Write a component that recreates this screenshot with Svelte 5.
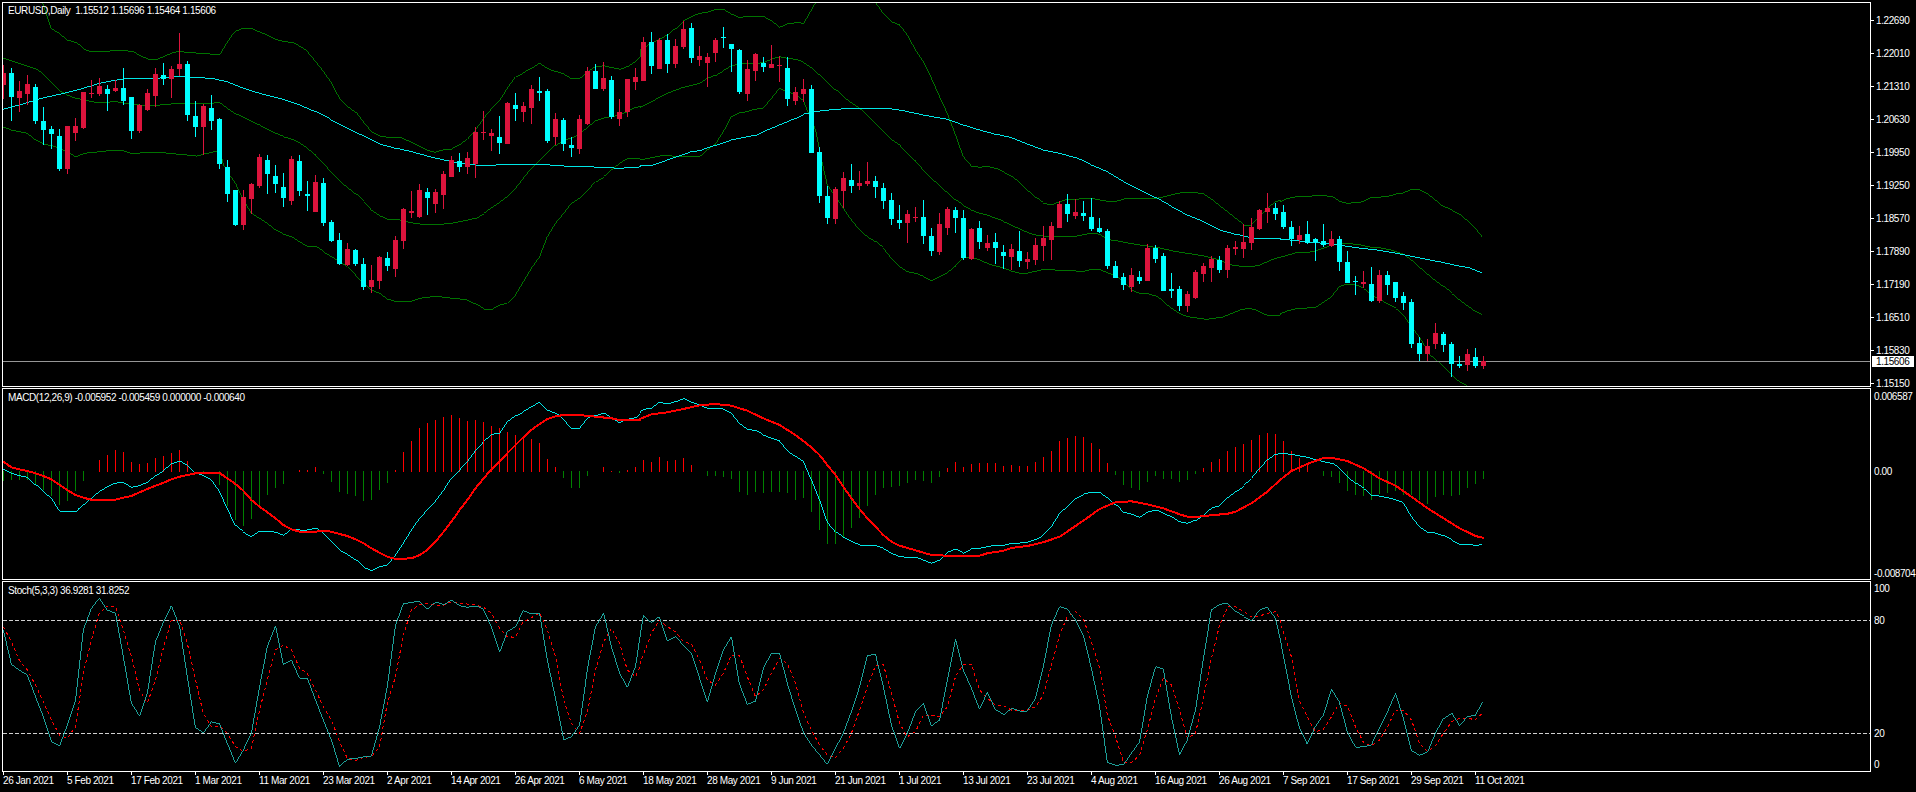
<script>
  // crops the curves were read from: [left edge, horizontal scale]
  const crops = [[0, 2.45], [640, 2.45], [1280, 2.465]];

  function points(chunks, yBase) {
    const out = [];
    chunks.forEach((flat, i) => {
      for (let k = 0; k < flat.length; k += 2) {
        const x = crops[i][0] + flat[k] / crops[i][1];
        out.push(`${x.toFixed(1)},${(yBase + flat[k + 1] / 3).toFixed(1)}`);
      }
    });
    return out.join(' ');
  }

  const barX = (n) => 3 + 8 * n;

  // [bull, high, bodyTop, bodyBottom, low] in third-pixels
  const candles = [
    [1,195,219,255,297],[0,205,219,291,365],[1,243,273,294,335],[1,225,252,282,315],[0,252,261,363,372],
    [0,321,363,390,435],[0,378,387,402,447],[0,388,408,507,513],[1,378,378,507,522],[1,354,378,399,423],
    [1,276,276,384,387],[1,240,279,282,294],[1,234,258,282,288],[0,255,267,282,333],[1,240,264,273,276],
    [0,204,264,303,315],[0,291,291,393,417],[1,312,315,393,399],[1,267,279,330,333],[1,204,222,288,321],
    [0,190,225,237,255],[1,198,207,237,294],[1,99,192,207,228],[0,183,192,345,363],[0,303,348,381,411],
    [1,312,318,381,465],[0,285,324,363,390],[0,354,357,492,507],[0,480,501,582,606],[0,570,570,675,678],
    [1,570,591,675,690],[1,549,552,597,642],[1,462,471,558,564],[0,465,480,522,582],[0,495,528,552,579],
    [0,519,561,594,621],[1,468,477,603,615],[0,465,483,573,588],[0,543,582,588,633],[1,525,546,636,636],
    [0,534,549,669,678],[0,660,666,723,726],[0,699,720,792,795],[1,729,747,795,798],[0,747,750,792,798],
    [0,774,792,861,870],[1,795,840,861,879],[1,768,771,843,867],[0,756,774,798,813],[1,708,720,807,831],
    [1,624,627,723,747],[1,573,633,639,654],[1,552,570,651,654],[0,564,576,594,645],[1,567,576,612,639],
    [1,513,522,585,627],[1,468,480,531,531],[0,459,483,501,516],[1,456,474,501,522],[1,381,396,492,534],
    [1,333,396,399,420],[1,387,399,408,453],[0,348,411,429,462],[1,306,309,432,432],[0,279,315,327,363],
    [1,306,318,336,366],[1,255,267,324,372],[0,231,273,279,303],[0,267,273,423,429],[1,339,357,411,435],
    [0,354,360,432,453],[0,411,435,444,471],[1,345,357,447,462],[1,201,213,372,375],[0,192,213,267,267],
    [1,186,234,267,273],[0,228,240,351,357],[1,297,336,357,378],[1,237,237,336,351],[1,204,231,246,270],
    [1,111,126,243,243],[0,96,126,198,222],[1,114,120,207,207],[0,102,120,192,219],[1,117,138,192,204],
    [1,63,87,141,147],[0,69,84,174,189],[1,138,168,180,198],[1,159,171,189,261],[1,114,120,159,186],
    [0,81,111,114,144],[0,132,132,147,216],[0,147,150,276,282],[1,180,207,282,303],[1,159,162,213,243],
    [0,171,189,201,216],[1,135,192,204,204],[1,168,195,198,246],[0,171,204,297,318],[1,261,276,303,315],
    [1,237,267,282,306],[0,255,267,459,459],[0,441,456,588,609],[0,558,588,654,672],[1,561,567,657,672],
    [1,516,534,573,624],[0,492,540,558,579],[1,513,549,558,570],[1,486,543,552,558],[0,528,543,561,594],
    [0,549,564,603,627],[0,579,600,657,675],[0,615,660,669,687],[1,630,642,669,729],[1,621,651,654,666],
    [0,600,651,708,732],[0,684,708,753,768],[1,639,672,756,765],[1,621,627,684,705],[0,621,630,654,699],
    [0,630,654,774,780],[1,684,687,777,780],[0,663,684,726,747],[1,705,729,744,753],[0,699,726,744,792],
    [0,735,756,768,807],[1,732,747,771,810],[0,693,753,783,801],[1,756,777,786,807],[1,714,735,780,795],
    [1,678,714,738,783],[1,666,678,720,780],[1,603,612,684,684],[0,582,612,642,666],[1,597,636,648,657],
    [0,603,639,648,663],[0,594,651,687,693],[0,654,684,696,699],[0,687,693,798,807],[0,783,798,834,834],
    [0,819,831,855,870],[1,804,825,861,876],[0,813,831,843,852],[1,732,744,843,843],[0,735,744,777,789],
    [0,759,768,873,873],[0,819,867,873,894],[0,858,867,918,933],[1,873,882,918,936],[1,810,816,894,897],
    [1,789,798,822,846],[1,768,777,804,846],[0,768,780,810,819],[1,735,744,810,834],[1,723,741,747,765],
    [1,672,726,747,774],[1,654,681,729,750],[1,627,630,687,690],[1,579,624,636,669],[0,609,624,642,660],
    [0,615,636,681,687],[0,663,681,717,738],[1,678,705,720,732],[0,663,702,729,732],[0,714,717,726,783],
    [0,672,723,735,741],[1,693,717,738,741],[0,708,717,786,813],[0,753,786,849,849],[0,828,843,846,885],
    [1,813,846,852,864],[0,801,852,903,906],[1,810,825,903,909],[0,813,825,855,885],[0,846,846,894,906],
    [0,876,888,909,930],[0,897,906,1032,1044],[0,1011,1029,1062,1083],[1,1017,1038,1062,1083],[1,969,999,1032,1047],
    [0,996,1002,1035,1056],[0,1026,1032,1092,1131],[0,1068,1092,1098,1104],[1,1047,1062,1095,1113],[0,1044,1071,1098,1104],
    [1,1068,1083,1098,1107]
  ];

  const upperBand = points([
    [105,10,125,85,145,100,165,120,185,127,205,148,225,155,250,155,280,152,300,152,325,154,345,168,365,178,385,178,420,160,440,153,460,158,500,160,538,165,555,130,575,95,595,85,615,85,650,103,680,120,700,125,720,128,750,150,770,180,790,210,810,245,832,295,850,318,875,340,890,365,910,395,930,408,950,412,985,414,1005,425,1030,440,1050,452,1065,457,1085,450,1105,448,1125,435,1145,418,1165,390,1185,355,1205,325,1225,300,1243,265,1263,230,1282,218,1302,205,1322,190,1341,205,1361,215,1381,222,1400,236,1420,236,1440,215,1459,200,1480,197,1500,203,1520,208,1540,198,1557,185,1568,170],
    [0,150,20,135,47,118,67,105,87,85,106,62,126,50,146,40,165,37,185,28,204,28,224,42,243,52,263,50,302,49,322,62,342,82,361,72,381,68,401,70,420,30,430,8,470,-60,540,-60,577,8,596,40,616,65,636,75,655,105,675,150,694,185,714,235,734,290,753,340,773,405,792,470,812,498,832,502,851,499,871,505,891,517,910,528,930,547,949,570,969,592,988,610,1008,615,1028,605,1047,598,1067,598,1087,595,1106,595,1126,600,1145,604,1165,604,1185,596,1204,597,1224,596,1243,595,1263,595,1282,590,1302,585,1322,579,1341,577,1361,578,1381,582,1400,597,1420,617,1440,635,1459,655,1479,677,1498,675,1518,650,1537,625,1557,605,1568,600],
    [0,605,20,595,40,590,70,590,87,586,107,586,127,590,146,604,166,610,186,608,206,604,225,592,245,592,265,588,285,582,304,579,324,568,344,570,364,582,383,600,403,620,423,630,443,643,462,662,482,685,499,712]
  ], 0);

  const midBand = points([
    [8,175,47,190,87,207,107,225,127,250,146,272,165,285,185,295,224,305,243,308,283,305,302,310,342,315,381,316,420,312,459,310,498,312,518,310,538,307,557,325,577,342,596,352,636,375,655,388,675,400,694,410,714,417,734,428,753,445,773,465,792,490,812,517,832,543,851,562,871,582,891,605,910,630,930,647,949,657,979,660,1008,668,1028,672,1047,675,1087,672,1106,670,1126,665,1165,655,1185,640,1224,607,1243,590,1263,565,1282,535,1302,505,1322,480,1341,458,1361,435,1381,420,1400,415,1420,402,1440,382,1459,362,1479,353,1498,350,1518,345,1537,335,1557,322,1568,318],
    [0,322,28,305,67,280,106,262,146,250,165,235,185,225,204,212,224,197,243,192,263,190,283,190,302,188,322,178,342,170,361,175,381,178,401,188,420,203,440,225,459,247,479,270,498,290,518,308,538,325,557,345,577,370,596,395,616,418,636,435,655,460,675,483,694,510,714,535,734,557,753,578,773,600,792,617,812,630,832,640,851,645,871,655,891,665,910,675,930,687,949,697,969,705,988,708,1008,710,1047,710,1067,708,1106,699,1126,703,1145,718,1165,722,1185,727,1224,735,1263,742,1302,752,1341,760,1381,768,1420,780,1440,792,1459,797,1479,800,1500,800,1518,795,1537,785,1557,775,1568,770],
    [0,772,20,765,40,758,70,757,87,753,107,745,127,735,146,730,166,730,186,733,206,737,225,742,245,743,265,748,285,755,304,762,324,780,344,802,364,823,383,842,403,860,423,880,443,900,462,917,482,935,499,946]
  ], 0);

  const lowerBand = points([
    [8,381,28,390,47,395,67,400,87,420,106,432,127,437,146,445,165,455,185,470,204,460,224,458,243,455,283,450,302,452,322,460,342,459,400,458,430,462,459,465,479,468,498,463,518,457,538,453,548,495,557,515,577,550,596,600,616,640,636,655,655,670,675,690,694,703,714,710,734,725,753,739,773,740,792,755,812,770,832,785,851,800,871,825,891,850,910,870,930,880,949,897,969,904,1008,904,1028,895,1067,889,1106,895,1126,897,1145,900,1165,912,1185,927,1204,929,1224,915,1243,910,1263,885,1282,845,1302,805,1322,770,1341,710,1361,670,1381,640,1400,610,1420,595,1440,570,1459,545,1479,530,1498,510,1518,490,1537,476,1557,475,1568,478],
    [0,480,20,475,60,465,87,470,146,470,165,450,185,432,204,395,224,350,243,338,263,335,283,327,302,325,322,295,342,265,361,275,381,285,401,305,430,390,445,480,459,555,479,590,498,625,518,660,538,690,557,710,577,725,596,745,616,775,636,800,655,815,675,820,694,830,714,843,734,830,753,818,773,798,792,772,812,772,832,780,851,790,871,798,891,805,910,813,930,820,949,820,969,813,988,808,1047,812,1087,814,1106,808,1126,808,1145,818,1165,828,1204,870,1224,880,1243,880,1263,888,1282,905,1302,925,1322,940,1341,950,1388,958,1430,950,1470,930,1490,925,1510,930,1535,945,1568,945],
    [0,942,20,932,45,925,87,923,107,907,127,890,146,860,166,852,186,855,206,865,225,885,245,897,265,912,285,925,304,945,324,980,344,1012,370,1065,395,1090,423,1125,445,1148,460,1158]
  ], 0);

  const movingAvg = points([
    [8,328,47,315,107,293,146,283,204,265,243,250,283,240,312,235,381,235,440,229,479,233,518,235,557,245,596,265,636,280,694,298,734,315,773,335,812,360,851,385,891,408,930,432,969,445,1008,455,1047,468,1087,480,1126,490,1165,495,1204,496,1243,493,1322,493,1381,498,1440,500,1518,505,1557,502,1568,500],
    [0,498,28,497,67,480,126,455,146,452,185,435,224,420,283,405,322,385,381,355,401,342,440,333,479,328,518,325,606,325,645,332,694,345,753,358,792,375,832,390,871,403,910,413,949,432,988,450,1028,460,1067,473,1106,495,1145,515,1185,545,1224,570,1263,593,1302,620,1341,645,1381,665,1420,690,1459,703,1498,714,1568,715],
    [0,717,40,722,80,727,120,732,160,738,200,745,240,750,280,758,320,768,360,778,400,787,440,798,470,805,499,819]
  ], 0);

  const macdZero = 484;
  const histogram = [
    515,512,510,510,525,540,560,587,573,545,513,484,450,435,420,426,456,462,459,444,438,429,420,453,484,491,484,525,590,630,
    648,627,587,555,534,522,484,480,480,471,492,516,546,552,558,573,570,540,520,480,426,393,354,339,330,321,315,324,333,330,
    336,348,354,366,375,381,387,399,447,471,504,534,534,498,484,471,483,490,480,471,450,456,441,453,450,444,465,484,498,498,
    501,507,546,555,546,549,546,546,549,570,564,606,660,702,702,684,654,624,588,555,534,531,528,519,510,513,519,501,474,456,
    471,462,459,459,459,468,465,468,468,456,441,423,393,384,378,381,399,417,459,495,525,534,540,516,498,507,507,516,510,492,
    474,456,447,423,411,402,390,375,369,372,393,423,444,459,484,498,501,519,543,555,558,570,552,549,543,555,555,570,582,561,
    555,558,555,534,522,507
  ];

  const macdLine = points([
    [8,478,28,490,47,497,67,502,87,525,106,545,126,565,146,604,185,604,204,585,224,565,243,545,263,530,283,519,302,517,322,532,342,527,361,517,381,497,401,480,420,462,440,453,459,465,479,490,498,497,518,510,538,545,557,597,577,647,596,667,616,680,636,663,655,663,675,667,694,677,714,657,734,660,753,660,773,655,792,670,812,695,832,720,851,733,871,750,891,772,910,782,930,770,949,766,969,735,988,700,1008,660,1028,625,1047,600,1067,573,1087,540,1106,505,1126,480,1145,455,1165,422,1185,395,1204,373,1224,370,1243,335,1263,317,1282,305,1302,290,1322,277,1341,300,1361,310,1381,330,1400,355,1420,355,1440,323,1459,317,1479,308,1498,323,1518,338,1537,328,1557,323,1568,310],
    [0,307,8,298,28,295,47,277,67,282,87,275,106,265,126,277,146,285,165,295,204,297,224,310,243,340,263,357,283,362,302,375,322,385,342,393,361,422,381,440,401,457,420,510,440,570,459,637,479,667,498,682,518,693,538,705,557,706,577,707,596,715,616,730,636,740,655,742,675,743,694,750,714,760,734,750,753,727,773,717,792,730,812,717,832,715,851,710,871,706,891,706,910,700,930,699,949,697,969,688,988,675,1008,650,1028,610,1047,590,1067,565,1087,552,1106,547,1126,547,1145,563,1165,585,1185,607,1204,612,1224,622,1243,607,1263,600,1282,610,1302,620,1322,635,1341,640,1361,630,1381,615,1400,595,1420,587,1440,563,1459,545,1479,527,1498,505,1518,475,1537,450,1557,433,1568,430],
    [0,430,28,433,67,442,107,455,127,460,146,475,166,500,186,520,206,535,225,555,245,558,265,563,304,578,324,620,344,650,364,667,383,669,403,677,423,690,443,703,462,703,482,706,499,703]
  ], 310);

  const macdSignal = points([
    [8,455,28,472,47,478,67,483,87,490,106,498,126,508,146,525,165,540,185,555,204,563,224,569,283,569,302,563,322,558,342,547,361,537,381,527,401,518,420,508,440,500,459,495,479,490,538,489,557,505,577,522,596,542,616,570,636,590,655,607,675,625,694,645,714,658,734,665,773,665,792,662,812,665,832,672,851,678,871,688,891,700,910,715,930,728,949,740,969,747,1008,745,1028,735,1047,720,1067,695,1087,665,1106,635,1126,600,1145,570,1165,535,1185,505,1204,478,1224,455,1243,430,1263,405,1282,382,1302,360,1322,342,1341,327,1361,319,1381,315,1420,315,1459,320,1498,325,1518,330,1568,330],
    [0,327,28,313,67,307,106,297,146,286,185,282,224,287,263,302,302,325,342,345,381,375,420,412,440,435,459,465,479,495,498,530,518,565,538,597,557,625,577,650,596,675,616,695,636,707,675,721,714,735,753,737,832,737,851,730,891,722,910,714,949,708,988,697,1028,680,1067,648,1106,615,1126,597,1165,577,1204,574,1243,583,1282,595,1322,613,1341,620,1361,621,1400,616,1440,611,1459,605,1498,580,1537,545,1568,510],
    [0,510,28,483,67,462,107,444,127,443,166,453,206,475,245,505,285,527,324,560,364,595,403,625,443,655,482,678,502,684]
  ], 310);

  const stochMain = points([
    [8,180,28,283,47,300,67,315,87,380,106,440,126,515,146,528,165,465,185,390,204,180,224,115,243,85,263,120,283,130,302,260,322,400,342,438,361,370,381,215,401,155,420,107,440,170,459,320,479,475,498,490,518,455,538,462,557,520,577,580,596,540,616,490,636,350,655,230,675,168,694,283,714,270,734,325,753,325,773,390,792,450,812,510,832,590,851,568,871,565,891,560,910,558,930,470,949,350,969,165,988,102,1008,97,1028,94,1047,117,1067,97,1087,105,1106,90,1126,107,1145,112,1165,108,1185,120,1204,170,1224,247,1243,185,1263,170,1282,122,1302,132,1322,130,1341,270,1361,385,1381,510,1400,500,1420,465,1440,290,1459,170,1479,130,1498,230,1518,310,1537,352,1557,290,1568,200],
    [0,200,8,137,28,158,47,140,67,213,87,200,106,225,126,250,146,325,165,397,185,310,204,240,224,200,243,340,263,403,283,393,302,295,322,250,342,250,361,340,381,420,401,490,420,525,440,555,459,583,479,535,498,490,518,425,538,350,557,257,577,253,596,350,616,465,636,535,655,490,675,425,694,400,714,468,734,450,753,330,773,208,792,300,812,355,832,418,851,367,871,420,891,436,910,415,930,423,949,423,969,385,988,290,1008,165,1028,110,1047,117,1067,150,1087,200,1106,295,1126,410,1145,577,1165,586,1185,583,1204,550,1224,515,1243,380,1263,290,1282,298,1302,440,1322,555,1341,510,1361,420,1381,260,1400,120,1420,103,1440,100,1459,125,1479,140,1498,153,1518,120,1537,112,1557,145,1568,205],
    [0,205,28,380,47,470,67,522,87,470,107,435,127,358,146,395,166,485,186,532,206,530,225,525,245,475,265,425,285,370,304,445,324,542,344,556,364,545,383,490,403,445,423,428,443,467,462,440,482,435,499,397]
  ], 570);

  const stochSignal = points([
    [8,170,28,215,47,270,67,300,87,345,106,395,126,450,146,495,165,505,185,470,204,310,224,210,243,130,263,108,283,108,302,180,322,260,342,360,361,400,381,330,401,230,420,150,440,150,459,220,479,330,498,430,518,470,538,468,557,490,577,530,596,545,616,535,636,420,655,330,675,240,694,225,714,240,734,295,753,310,773,360,792,410,812,450,832,515,851,565,871,572,891,562,910,560,930,530,949,400,969,320,988,195,1008,120,1028,105,1047,100,1067,105,1087,105,1106,95,1126,100,1145,102,1165,105,1185,112,1204,130,1224,175,1243,200,1263,202,1282,155,1302,143,1322,128,1341,180,1361,260,1381,390,1400,460,1420,490,1440,420,1459,300,1479,215,1498,175,1518,220,1537,300,1557,320,1568,290],
    [0,280,28,190,47,150,67,170,87,185,106,215,126,222,146,270,165,330,185,345,204,310,224,255,243,255,263,320,283,380,302,360,322,310,342,265,361,280,381,340,401,430,420,480,440,525,459,555,479,563,498,535,518,490,538,420,557,350,577,287,596,283,616,370,636,460,655,500,675,485,694,435,714,435,734,440,753,410,773,320,792,283,812,283,832,360,851,385,871,405,891,408,910,420,930,423,949,420,969,410,988,375,1008,285,1028,195,1047,140,1067,125,1087,150,1106,215,1126,295,1145,435,1165,500,1185,578,1204,578,1224,555,1243,480,1263,385,1282,325,1302,345,1322,420,1341,505,1361,490,1381,380,1400,265,1420,165,1440,110,1459,110,1479,125,1498,140,1518,138,1537,130,1557,125,1568,150],
    [0,155,28,260,47,390,67,440,87,485,107,478,127,440,146,400,166,408,186,470,206,518,225,528,245,510,265,470,285,420,304,420,324,450,344,520,364,545,383,527,403,490,423,455,443,445,462,445,482,449,499,430]
  ], 570);

  const priceAxis = [
    ['1.22690', 20], ['1.22010', 53], ['1.21310', 86], ['1.20630', 119], ['1.19950', 152],
    ['1.19250', 185], ['1.18570', 218], ['1.17890', 251], ['1.17190', 284], ['1.16510', 317],
    ['1.15830', 350], ['1.15150', 383]
  ];
  const macdAxis = [['0.006587', 396], ['0.00', 471], ['-0.008704', 573]];
  const stochAxis = [['100', 588], ['80', 620], ['20', 733], ['0', 764]];

  const dates = [
    '26 Jan 2021', '5 Feb 2021', '17 Feb 2021', '1 Mar 2021', '11 Mar 2021', '23 Mar 2021',
    '2 Apr 2021', '14 Apr 2021', '26 Apr 2021', '6 May 2021', '18 May 2021', '28 May 2021',
    '9 Jun 2021', '21 Jun 2021', '1 Jul 2021', '13 Jul 2021', '23 Jul 2021', '4 Aug 2021',
    '16 Aug 2021', '26 Aug 2021', '7 Sep 2021', '17 Sep 2021', '29 Sep 2021', '11 Oct 2021'
  ];
</script>

<div class="terminal">
  <section class="pane">
    <div class="plot main">
      <span class="legend">EURUSD,Daily  1.15512 1.15696 1.15464 1.15606</span>
      <svg width="1867" height="383" viewBox="3 3 1867 383" shape-rendering="crispEdges">
        <polyline points={upperBand} class="band" />
        <polyline points={midBand} class="band" />
        <polyline points={lowerBand} class="band" />
        <polyline points={movingAvg} class="ma" />
        <rect x="3" y="361" width="1867" height="1" fill="#969696" />
        {#each candles as [bull, high, top, bottom, low], n}
          <g fill={bull ? '#dc143c' : '#00ffff'}>
            <rect x={barX(n)} y={Math.round(high / 3)} width="1" height={Math.round((low - high) / 3)} />
            <rect x={barX(n) - 2} y={Math.round(top / 3)} width="5" height={Math.max(1, Math.round((bottom - top) / 3))} />
          </g>
        {/each}
      </svg>
    </div>
    <div class="axis">
      {#each priceAxis as [label, y]}
        <span class="mark ticked" style="top: {y - 2}px">{label}</span>
      {/each}
      <span class="current">1.15606</span>
    </div>
  </section>

  <section class="pane">
    <div class="plot macd">
      <span class="legend lower">MACD(12,26,9) -0.005952 -0.005459 0.000000 -0.000640</span>
      <svg width="1867" height="190" viewBox="3 389 1867 190" shape-rendering="crispEdges">
        {#each histogram as end, n}
          {#if end > macdZero}
            <rect x={barX(n)} y="471" width="1" height={(end - macdZero) / 3} fill="#008000" />
          {:else if end < macdZero}
            <rect x={barX(n)} y={310 + end / 3} width="1" height={(486 - end) / 3} fill="#ff0000" />
          {/if}
        {/each}
        <polyline points={macdLine} class="macd-main" />
        <polyline points={macdSignal} class="macd-signal" />
      </svg>
    </div>
    <div class="axis">
      {#each macdAxis as [label, y]}
        <span class="mark" style="top: {y - 388}px">{label}</span>
      {/each}
    </div>
  </section>

  <section class="pane">
    <div class="plot stoch">
      <span class="legend lower">Stoch(5,3,3) 36.9281 31.8252</span>
      <svg width="1867" height="189" viewBox="3 582 1867 189" shape-rendering="crispEdges">
        <line x1="3" x2="1870" y1="620.5" y2="620.5" class="level" />
        <line x1="3" x2="1870" y1="733.5" y2="733.5" class="level" />
        <polyline points={stochSignal} class="stoch-signal" />
        <polyline points={stochMain} class="stoch-main" />
      </svg>
    </div>
    <div class="axis">
      {#each stochAxis as [label, y]}
        <span class="mark" style="top: {y - 581}px">{label}</span>
      {/each}
    </div>
  </section>

  <div class="dates">
    {#each dates as date}
      <span class="date">{date}</span>
    {/each}
  </div>
</div>

<style>
  :global(body) {
    margin: 0;
    background: #000;
  }

  .terminal {
    width: 1916px;
    height: 792px;
    box-sizing: border-box;
    padding: 2px 0 0 2px;
    overflow: hidden;
    background: #000;
    color: #fff;
    font-family: "Liberation Sans", Arial, sans-serif;
    font-size: 10px;
    letter-spacing: -0.4px;
    line-height: 12px;
  }

  .pane {
    display: flex;
    margin-bottom: 1px;
  }

  .plot {
    position: relative;
    flex: none;
    width: 1869px;
    box-sizing: border-box;
    border: 1px solid #fff;
    overflow: hidden;
  }

  .plot svg {
    display: block;
  }

  .legend {
    position: absolute;
    left: 5px;
    top: 2px;
    white-space: pre;
  }

  .legend.lower {
    top: 3px;
  }

  .axis {
    position: relative;
    flex: 1;
  }

  .mark {
    position: absolute;
    left: 3px;
    margin-top: 1px;
    transform: translateY(-50%);
    white-space: nowrap;
  }

  .mark.ticked {
    left: 5px;
  }

  .mark.ticked::before {
    content: '';
    position: absolute;
    left: -5px;
    top: 5px;
    width: 3px;
    height: 1px;
    background: #fff;
  }

  .current {
    position: absolute;
    left: 1px;
    top: 354px;
    width: 42px;
    box-sizing: border-box;
    padding-left: 4px;
    height: 11px;
    line-height: 11px;
    background: #fff;
    color: #000;
  }

  .band {
    fill: none;
    stroke: #008000;
    stroke-width: 0.9;
  }

  .ma,
  .macd-main {
    fill: none;
    stroke: #00ffff;
    stroke-width: 0.9;
  }

  .macd-signal {
    fill: none;
    stroke: #ff0000;
    stroke-width: 2;
  }

  .level {
    stroke: #d0d0d0;
    stroke-width: 1;
    stroke-dasharray: 4 2;
  }

  .stoch-main {
    fill: none;
    stroke: #20b2aa;
    stroke-width: 0.9;
  }

  .stoch-signal {
    fill: none;
    stroke: #ff0000;
    stroke-width: 1;
    stroke-dasharray: 3 3;
  }

  .dates {
    display: flex;
    margin-top: -1px;
    padding-left: 1px;
  }

  .date {
    position: relative;
    flex: none;
    width: 64px;
    padding-top: 3px;
    white-space: nowrap;
  }

  .date::before {
    content: '';
    position: absolute;
    left: 0;
    top: 0;
    width: 1px;
    height: 3px;
    background: #fff;
  }
</style>
